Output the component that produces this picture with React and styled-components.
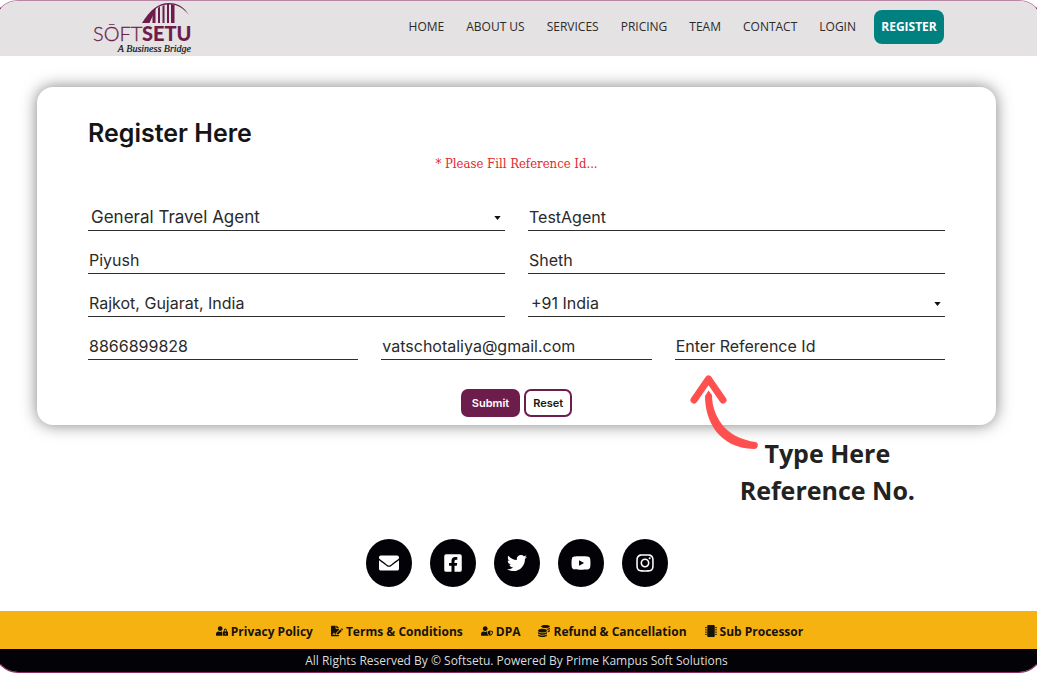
import React from "react";
import styled, { createGlobalStyle } from "styled-components";
import {
  FaCoins,
  FaEnvelope,
  FaFacebookSquare,
  FaFileSignature,
  FaInstagram,
  FaMicrochip,
  FaTwitter,
  FaUserLock,
  FaUserShield,
  FaYoutube,
} from "react-icons/fa";

const plum = "#6d1d4c";
const sans = '"Open Sans", "Noto Sans", sans-serif';
const form = 'Inter, "Open Sans", sans-serif';

const GlobalStyle = createGlobalStyle`
  * { box-sizing: border-box; }
  body { margin: 0; background: #fff; font-family: ${sans}; color: #222; }
  button, input, select { font: inherit; color: inherit; }
  a { color: inherit; text-decoration: none; }
`;

const Page = styled.div`
  overflow: hidden;
`;

const Frame = styled.div`
  display: flex;
  flex-direction: column;
  min-height: 100vh;
  margin: 0 -6px;
  overflow: hidden;
  border: 1px solid ${plum};
  border-top-color: #b986a6;
  border-bottom-color: #8a2f62;
  border-radius: 24px;
`;

const Header = styled.header`
  display: flex;
  align-items: flex-start;
  justify-content: space-between;
  height: 55px;
  padding: 0 98px;
  background: #e4e2e3;
`;

const Logo = styled.a`
  display: block;
  height: 55px;
`;

const Nav = styled.nav`
  display: flex;
  align-items: center;
  gap: 22px;
  padding-top: 9px;
`;

const NavLink = styled.a`
  font-size: 12px;
  line-height: 34px;
  color: #2b2b2b;
`;

const RegisterLink = styled(NavLink)`
  width: 70px;
  margin-left: -4px;
  border-radius: 8px;
  background: #018080;
  color: #fff;
  font-weight: 700;
  text-align: center;
`;

const Main = styled.main`
  flex: 1;
  padding: 31px 46px 0 42px;
`;

const CardArea = styled.div`
  position: relative;
`;

const Card = styled.form`
  padding: 28px 51px 8px;
  border-radius: 16px;
  background: #fff;
  box-shadow: 0 0 16px rgba(0, 0, 0, 0.5);
  font-family: ${form};
`;

const Title = styled.h1`
  margin: 0;
  font-size: 25px;
  line-height: 36px;
  font-weight: 600;
  color: #151515;
`;

const ErrorText = styled.p`
  margin: 0 0 26px;
  font-family: "DejaVu Serif Condensed", "DejaVu Serif", serif;
  font-size: 13px;
  line-height: 26px;
  text-align: center;
  color: #e02b2b;
`;

const Fields = styled.div`
  display: grid;
  grid-template-columns: repeat(6, minmax(0, 1fr));
  column-gap: 23px;
  row-gap: 15px;
`;

const Field = styled.div`
  position: relative;
  grid-column: span ${(p) => p.$span};
`;

const Input = styled.input`
  display: block;
  width: 100%;
  height: 28px;
  padding: 0 1px;
  border: 0;
  border-bottom: 1px solid #2e2e2e;
  border-radius: 0;
  outline: 0;
  background: transparent;
  font-size: 16px;
  color: #2a2a2a;

  &::placeholder {
    color: #2a2a2a;
    opacity: 1;
  }
`;

const Select = styled(Input).attrs({ as: "select" })`
  appearance: none;
  padding: 0 24px 0 3px;
  font-size: ${(p) => (p.$large ? 17 : 16)}px;
`;

const Caret = styled.svg`
  position: absolute;
  right: 4px;
  top: 13px;
  pointer-events: none;
`;

const Actions = styled.div`
  display: flex;
  justify-content: center;
  gap: 4px;
  margin-top: 29px;
`;

const Button = styled.button`
  height: 28px;
  padding: 0 ${(p) => (p.$primary ? 9 : 7)}px;
  border: 2px solid ${plum};
  border-radius: 7px;
  background: ${(p) => (p.$primary ? plum : "#fff")};
  color: ${(p) => (p.$primary ? "#fff" : "#151515")};
  font-size: 11px;
  font-weight: 600;
`;

const Hint = styled.div`
  position: absolute;
  top: 287px;
  right: 81px;
  pointer-events: none;

  svg {
    display: block;
  }
`;

const HintText = styled.p`
  margin: -15px 0 0 52px;
  font-size: 25px;
  line-height: 37px;
  font-weight: 700;
  text-align: center;
  white-space: nowrap;
  color: #222;
`;

const Social = styled.div`
  display: flex;
  justify-content: center;
  gap: 18px;
  margin: 114px 0 23px;
`;

const SocialLink = styled.a`
  display: flex;
  align-items: center;
  justify-content: center;
  width: 46px;
  height: 48px;
  border-radius: 50%;
  background: #020207;
  color: #fff;
  font-size: 20px;
`;

const Policies = styled.nav`
  display: flex;
  align-items: center;
  justify-content: center;
  gap: 18px;
  height: 38px;
  padding: 2px 18px 0 0;
  background: #f6b211;
`;

const PolicyLink = styled.a`
  display: flex;
  align-items: center;
  gap: 3px;
  font-size: 12px;
  font-weight: 700;
  color: #17130a;
`;

const Copyright = styled.p`
  margin: 0;
  padding-right: 4px;
  background: #020207;
  color: #dcdcdc;
  font-size: 12px;
  line-height: 23px;
  text-align: center;
`;

const navItems = ["Home", "About Us", "Services", "Pricing", "Team", "Contact", "Login"];

const socials = [
  ["Email", FaEnvelope],
  ["Facebook", FaFacebookSquare],
  ["Twitter", FaTwitter],
  ["YouTube", FaYoutube],
  ["Instagram", FaInstagram],
];

const policies = [
  ["Privacy Policy", FaUserLock],
  ["Terms & Conditions", FaFileSignature],
  ["DPA", FaUserShield],
  ["Refund & Cancellation", FaCoins],
  ["Sub Processor", FaMicrochip],
];

function SoftSetuLogo() {
  return (
    <svg width="102" height="55" viewBox="0 0 102 55" role="img" aria-label="Softsetu">
      <g fill={plum}>
        <path d="M49 22C57 9 65 2 76 2c9 0 15 4 20 12-6-7-11-10-18-10.500-6-.5-11 1-15 4L56.500 22z" />
        <path d="M59.500 10l3-3v15h-3zM65 7l2-2v17h-2zM69.500 5l2-1v18h-2zM74 3h2v19h-2zM78 3l3.500 1v18H78z" />
      </g>
      <g fill={plum} fontFamily="Lato, sans-serif" fontSize="20">
        <text x="0" y="40" fontWeight="300" stroke={plum} strokeWidth="0.3">SŌFT</text>
        <text x="49" y="40" fontWeight="900">SETU</text>
      </g>
      <text x="98" y="51" textAnchor="end" fontFamily="'Liberation Serif', serif" fontStyle="italic" fontSize="10" fill="#111" stroke="#111" strokeWidth="0.2">
        A Business Bridge
      </text>
    </svg>
  );
}

function TextField({ span = 3, label, ...rest }) {
  return (
    <Field $span={span}>
      <Input aria-label={label} {...rest} />
    </Field>
  );
}

function SelectField({ label, option, large }) {
  return (
    <Field $span={3}>
      <Select aria-label={label} $large={large}>
        <option>{option}</option>
      </Select>
      <Caret width="7" height="4" viewBox="0 0 8 5" aria-hidden="true">
        <path d="M0 0h8L4 5z" fill="#111" />
      </Caret>
    </Field>
  );
}

export default function App() {
  return (
    <Page>
      <GlobalStyle />
      <Frame>
        <Header>
          <Logo href="#home">
            <SoftSetuLogo />
          </Logo>
          <Nav>
            {navItems.map((item) => (
              <NavLink key={item} href="#nav">
                {item.toUpperCase()}
              </NavLink>
            ))}
            <RegisterLink href="#register">REGISTER</RegisterLink>
          </Nav>
        </Header>
        <Main>
          <CardArea>
            <Card onSubmit={(e) => e.preventDefault()}>
              <Title>Register Here</Title>
              <ErrorText role="alert">* Please Fill Reference Id...</ErrorText>
              <Fields>
                <SelectField label="Agent type" option="General Travel Agent" large />
                <TextField label="Agency name" defaultValue="TestAgent" />
                <TextField label="First name" defaultValue="Piyush" />
                <TextField label="Last name" defaultValue="Sheth" />
                <TextField label="City" defaultValue="Rajkot, Gujarat, India" />
                <SelectField label="Country code" option="+91 India" />
                <TextField span={2} label="Mobile" type="tel" defaultValue="8866899828" />
                <TextField span={2} label="Email" type="email" defaultValue="vatschotaliya@gmail.com" />
                <TextField span={2} label="Reference Id" placeholder="Enter Reference Id" />
              </Fields>
              <Actions>
                <Button type="submit" $primary>Submit</Button>
                <Button type="reset">Reset</Button>
              </Actions>
            </Card>
            <Hint>
              <svg width="72" height="76" viewBox="0 0 72 76" fill="none" aria-hidden="true">
                <path d="M6 26L20.500 5L35 26" stroke="#ff5050" strokeWidth="7" strokeLinecap="round" strokeLinejoin="round" />
                <path
                  d="M20.500 16.500L17 22C17 46 30 74 66 75C71 75 71 68 67 68C55 66 45 62 37 54C29 45 24 34 24 21Z"
                  fill="#ff5050"
                />
              </svg>
              <HintText>
                Type Here
                <br />
                Reference No.
              </HintText>
            </Hint>
          </CardArea>
          <Social>
            {socials.map(([name, Icon]) => (
              <SocialLink key={name} href="#social" aria-label={name}>
                <Icon />
              </SocialLink>
            ))}
          </Social>
        </Main>
        <footer>
          <Policies>
            {policies.map(([name, Icon]) => (
              <PolicyLink key={name} href="#policy">
                <Icon />
                {name}
              </PolicyLink>
            ))}
          </Policies>
          <Copyright>All Rights Reserved By © Softsetu. Powered By Prime Kampus Soft Solutions</Copyright>
        </footer>
      </Frame>
    </Page>
  );
}
